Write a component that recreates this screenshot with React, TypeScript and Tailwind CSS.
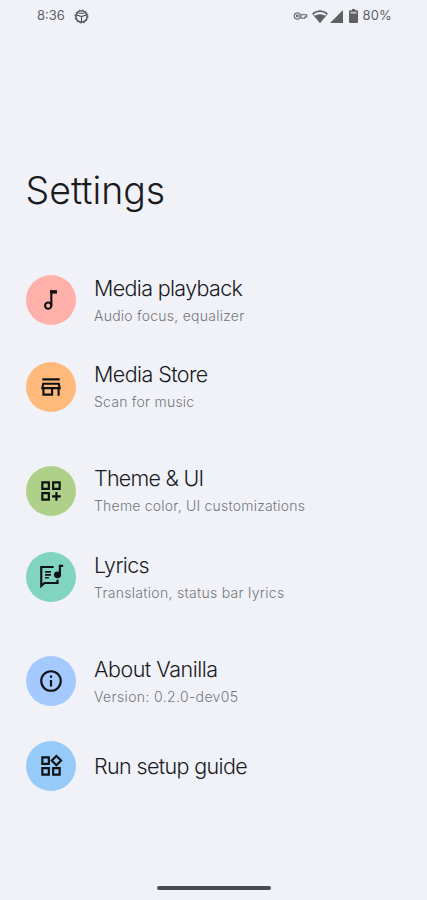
import type { ReactNode } from 'react';
import clsx from 'clsx';

type Item = {
  title: string;
  summary?: string;
  color: string;
  icon: ReactNode;
  titleClass: string;
  summaryClass?: string;
};

const Icon = ({ children }: { children: ReactNode }) => (
  <svg viewBox="0 0 24 24" className="size-[26px]" fill="none" stroke="currentColor" strokeWidth="2">
    {children}
  </svg>
);

const groups: Item[][] = [
  [
    {
      title: 'Media playback',
      summary: 'Audio focus, equalizer',
      color: 'bg-[#ffb0a8]',
      titleClass: 'tracking-[-0.66px]',
      summaryClass: 'tracking-[0.24px]',
      icon: (
        <Icon>
          <circle cx="9.4" cy="17.2" r="2.9" />
          <path d="M12.3 17.2V3" />
          <path d="M11.3 4.5h6.2" strokeWidth="3.2" />
        </Icon>
      ),
    },
    {
      title: 'Media Store',
      summary: 'Scan for music',
      color: 'bg-[#ffb97a]',
      titleClass: 'tracking-[-0.58px]',
      summaryClass: 'tracking-[0.23px]',
      icon: (
        <Icon>
          <path d="M4 5h16M4.8 9h14.4l.8 4H4zM5 13v6h8v-6M19 13v7" />
        </Icon>
      ),
    },
  ],
  [
    {
      title: 'Theme & UI',
      summary: 'Theme color, UI customizations',
      color: 'bg-[#aed088]',
      titleClass: 'tracking-[-0.75px]',
      summaryClass: 'tracking-[0.21px]',
      icon: (
        <Icon>
          <path d="M4 4h6v6H4zM14 4h6v6h-6zM4 14h6v6H4zM17 13v8M13 17h8" />
        </Icon>
      ),
    },
    {
      title: 'Lyrics',
      summary: 'Translation, status bar lyrics',
      color: 'bg-[#80d4c0]',
      titleClass: 'tracking-[-0.6px]',
      summaryClass: 'tracking-[0.29px]',
      icon: (
        <Icon>
          <path d="M14.5 2.8H3v17.4l3-2.7h12v-3" />
          <path d="M6.5 7.3H12M6.5 10H12M6.5 12.7H10" strokeWidth="1.5" />
          <ellipse cx="18" cy="10" rx="3.3" ry="3.1" fill="currentColor" stroke="none" />
          <path d="M20.2 10.5V1.8h3" strokeWidth="2" />
        </Icon>
      ),
    },
  ],
  [
    {
      title: 'About Vanilla',
      summary: 'Version: 0.2.0-dev05',
      color: 'bg-[#a3c9ff]',
      titleClass: 'tracking-[-0.5px]',
      summaryClass: 'tracking-[0.36px]',
      icon: (
        <Icon>
          <circle cx="12" cy="12" r="9" />
          <path d="M12 7v2M12 11v6" />
        </Icon>
      ),
    },
    {
      title: 'Run setup guide',
      color: 'bg-[#96caf8]',
      titleClass: 'tracking-[-0.64px]',
      icon: (
        <Icon>
          <path d="M4 4h6v6H4zM4 14h6v6H4zM14 14h6v6h-6zM17 2.7 21.3 7 17 11.3 12.7 7z" />
        </Icon>
      ),
    },
  ],
];

function StatusBar() {
  return (
    <header className="flex h-8 items-center pr-[35px] pl-[37px] text-[13px] text-[#606165]">
      <span>8:36</span>
      <svg viewBox="0 0 16 16" className="ml-[9px] size-[15px] text-[#4a4b50]" fill="none" stroke="currentColor" strokeWidth="1.5">
        <circle cx="8" cy="8" r="6" />
        <circle cx="8" cy="8" r="7" strokeDasharray="1.8 1.9" strokeWidth="1" />
        <path d="M3 6.5 8 8l5-1.5M8 8v6M5 4.5h6" strokeWidth="1.2" />
      </svg>
      <div className="ml-auto flex items-center">
        <svg viewBox="0 0 15 10" className="h-2.5 w-[15px]" fill="none" stroke="currentColor" strokeWidth="1.1">
          <path d="M7.3 3.8A3.2 3.2 0 1 0 7.3 6.2L9 7.3h2.7V6h2V3.8z" />
          <circle cx="4.3" cy="5" r=".9" />
          <path d="M6 5h3" />
        </svg>
        <svg viewBox="0 0 16 13" className="ml-1 h-[13px] w-4" fill="none" stroke="currentColor">
          <path d="M8 12.5.6 3.6C4.8.2 11.2.2 15.4 3.6z" />
          <path d="M8 12.5 3 6.3c3-2 7-2 10 0z" fill="currentColor" />
          <path d="M1 3.7C5 .5 11 .5 15 3.7" strokeWidth="1.6" />
        </svg>
        <svg viewBox="0 0 13 13" className="ml-0.5 size-[13px]" fill="currentColor">
          <path d="M13 0v13H0z" />
        </svg>
        <svg viewBox="0 0 9 14" className="ml-[6px] h-3.5 w-[9px]" fill="currentColor">
          <path d="M3 0h3v1.3h1.8q1.2 0 1.2 1.2v10.3Q9 14 7.8 14H1.2Q0 14 0 12.8V2.5q0-1.2 1.2-1.2H3z" />
          <path d="M1.5 2.8h6v1.8h-6z" fill="#c4c5ca" />
        </svg>
        <span className="ml-1 tracking-[0.2px]">80%</span>
      </div>
    </header>
  );
}

function Row({ item }: { item: Item }) {
  return (
    <li className={clsx('flex items-center gap-[18px] pl-[26px]', item.summary ? 'h-[87px] last:h-[86px]' : 'h-[83px]')}>
      <div className={clsx('flex size-[50px] shrink-0 items-center justify-center rounded-full text-[#111214]', item.color)}>
        {item.icon}
      </div>
      <div className={clsx('whitespace-nowrap', item.summary && 'pt-0.5')}>
        <div className={clsx('text-[21.5px] leading-[28px] font-light text-[#1a1b1e]', item.titleClass)}>
          {item.title}
        </div>
        {item.summary && (
          <div className={clsx('text-[14px] leading-[27px] font-light text-[#76777b]', item.summaryClass)}>
            {item.summary}
          </div>
        )}
      </div>
    </li>
  );
}

export default function App() {
  return (
    <div className="flex h-[900px] w-full flex-col overflow-hidden bg-[#f0f2f8] font-['Inter',sans-serif]">
      <StatusBar />
      <h1 className="mt-[135px] pl-[25.5px] text-[37.5px] leading-[48px] font-light text-[#1a1b1e]">Settings</h1>
      <main className="mt-[41.5px] flex flex-col gap-[17.5px]">
        {groups.map((items) => (
          <ul key={items[0].title}>
            {items.map((item) => (
              <Row key={item.title} item={item} />
            ))}
          </ul>
        ))}
      </main>
      <div className="mx-auto mt-auto mb-[10px] h-1 w-[114px] rounded-full bg-[#4a4b50]" />
    </div>
  );
}
